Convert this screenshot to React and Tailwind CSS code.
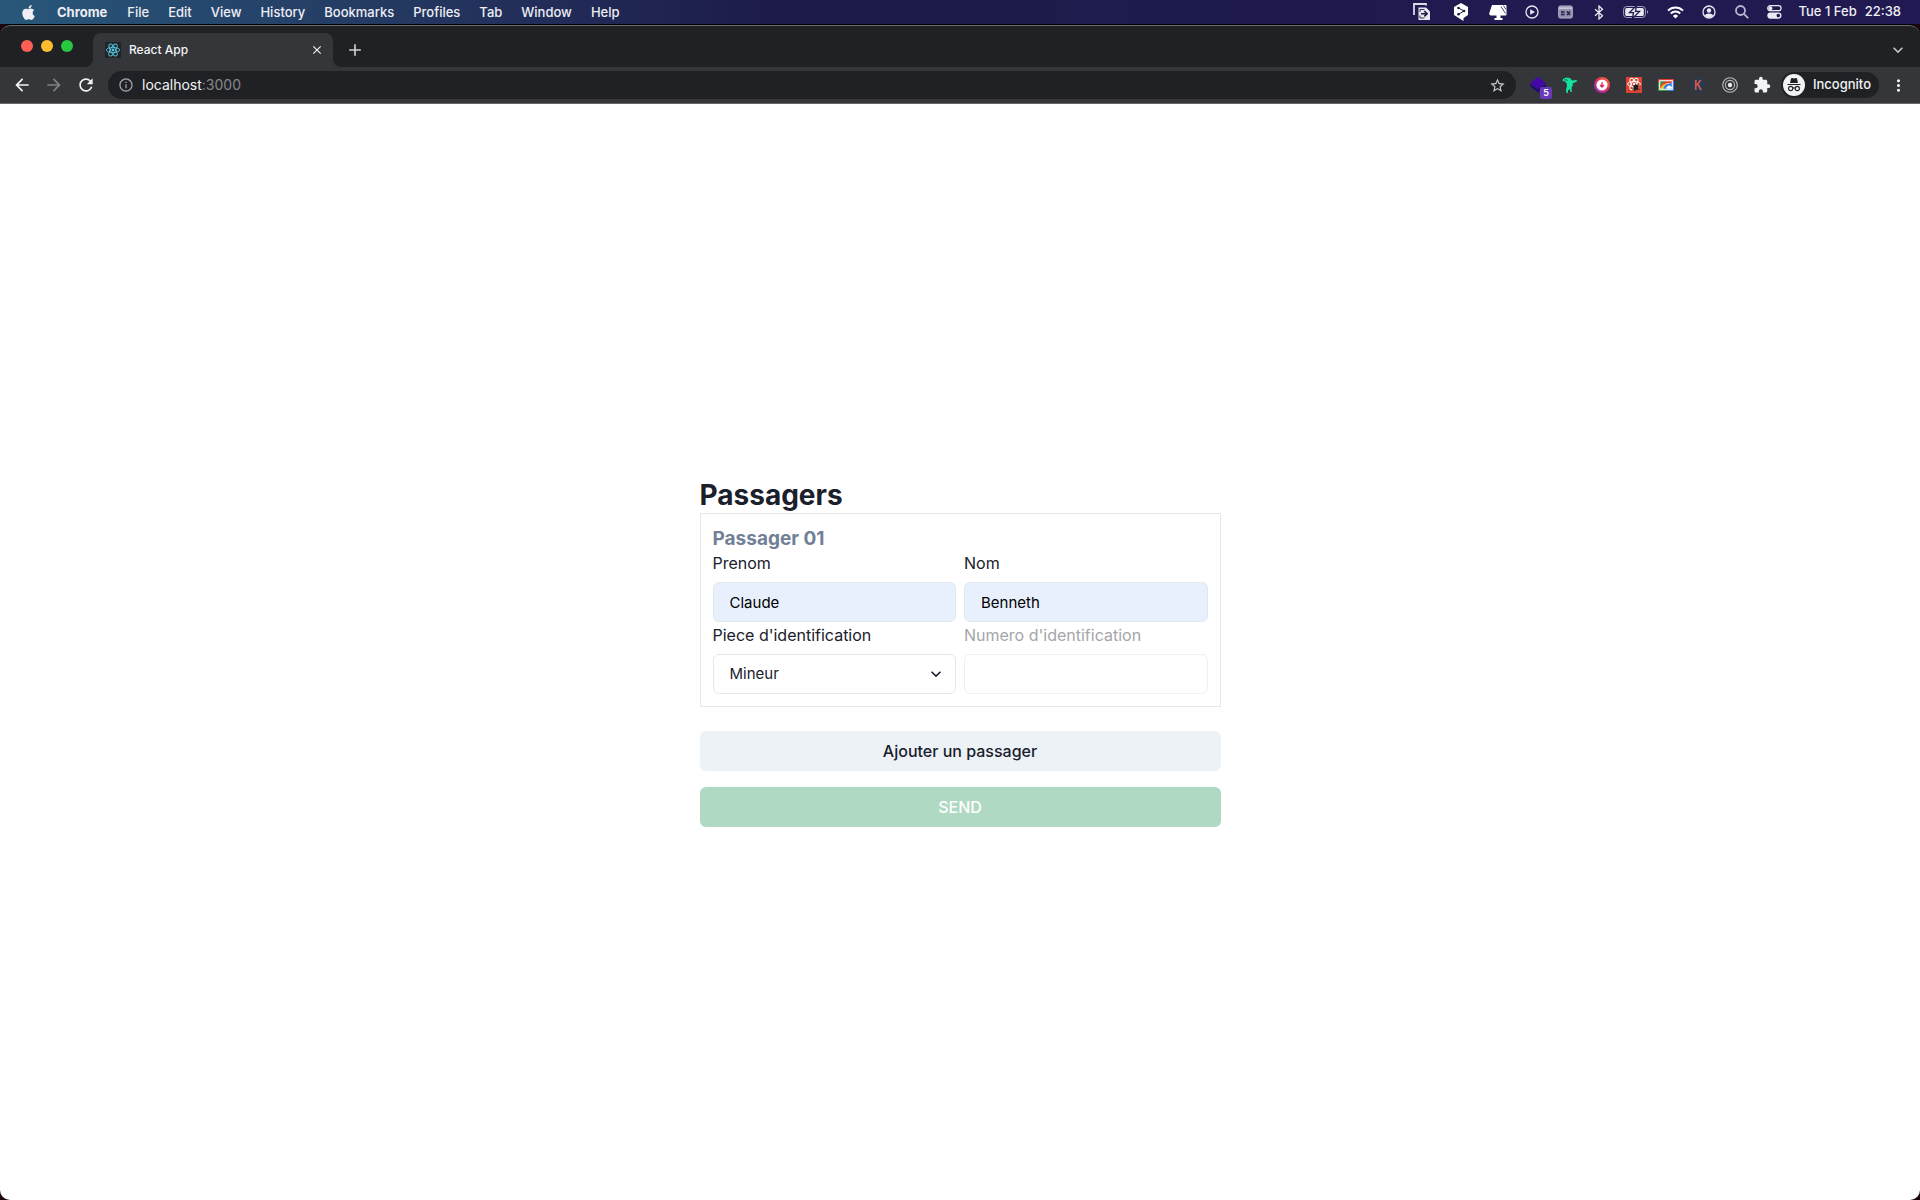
import React, { useState } from "react";
import {
  MdArrowBack,
  MdArrowForward,
  MdRefresh,
  MdStarBorder,
  MdExtension,
  MdInfoOutline,
  MdMoreVert,
  MdClose,
  MdAdd,
  MdKeyboardArrowDown,
} from "react-icons/md";
import { FaApple } from "react-icons/fa";

const menus = [
  "File",
  "Edit",
  "View",
  "History",
  "Bookmarks",
  "Profiles",
  "Tab",
  "Window",
  "Help",
];

const ScreensIcon = () => (
  <svg width="18" height="18" viewBox="0 0 18 18" fill="none">
    <path d="M1 12V1h12v1.500" stroke="#dcdce6" strokeWidth="1.800" />
    <path d="M5.500 4.500H13l4 4V17H5.500z" fill="#e9e9f2" />
    <path d="M7 9V6.500h4.500M7 12.500V15h4.500" stroke="#1d1b4b" strokeWidth="0.900" />
    <path d="M8 10.700h6M11.300 8l2.800 2.700-2.800 2.700" stroke="#1d1b4b" strokeWidth="1.600" />
  </svg>
);

const TranslateIcon = () => (
  <svg width="16" height="18" viewBox="0 0 16 18" fill="none">
    <path d="M8 0l7 4v8l-4.500 3v3L6.500 15.500 1 12V4z" fill="#fff" />
    <path d="M5.500 5L11 8l-5.500 3.200" stroke="#1d1b4b" />
    <circle cx="5.500" cy="5" r="1.300" fill="#1d1b4b" />
    <circle cx="11" cy="8" r="1.300" fill="#1d1b4b" />
    <circle cx="5.500" cy="11.200" r="1.300" fill="#1d1b4b" />
  </svg>
);

const MonitorIcon = () => (
  <svg width="19" height="17" viewBox="0 0 19 17">
    <path
      d="M3 1h13.500a1 1 0 0 1 1 1v8.500a1 1 0 0 1-1 1H11.500V14h2v2h-8v-2h2v-2.500H1.500L0 10z"
      fill="#fff"
    />
    <path d="M12 2.500l4.500 7M14.500 1.500l2.500 4" stroke="#1d1b4b" strokeWidth="0.800" />
  </svg>
);

const PlayIcon = () => (
  <svg width="14" height="14" viewBox="0 0 14 14">
    <circle cx="7" cy="7" r="6" fill="none" stroke="#e9e9f2" strokeWidth="1.300" />
    <path d="M5.200 4.200L10 7l-4.800 2.800z" fill="#e9e9f2" />
  </svg>
);

const CalendarIcon = () => (
  <svg width="15" height="14" viewBox="0 0 15 14" fill="none">
    <rect x="0.700" y="1" width="13.600" height="12" rx="1.500" fill="#8f8eab" stroke="#b5b4ca" />
    <path d="M1 3.200h13" stroke="#c6c5d8" strokeWidth="1.800" />
    <path d="M3 7h3.500M3 9.500h3.500M9 6.500l3 3.500M12 6.500L9 10" stroke="#1d1b4b" strokeWidth="1.300" />
  </svg>
);

const BluetoothIcon = () => (
  <svg width="10" height="15" viewBox="0 0 10 15" fill="none">
    <path d="M1 4.200l7.500 6.600L5 14V1l3.500 3.200L1 10.800" stroke="#e9e9f2" strokeWidth="1.300" />
  </svg>
);

const BatteryIcon = () => (
  <svg width="26" height="14" viewBox="0 0 26 14" fill="none">
    <rect x="0.600" y="1.500" width="21.800" height="11" rx="3" stroke="#a3a2bd" />
    <rect x="2.200" y="3" width="18.600" height="8" rx="1.600" fill="#e9e9f2" />
    <path d="M24 5.200c1.600.600 1.600 3 0 3.600z" fill="#a3a2bd" />
    <path
      d="M13.500 0.500L6.500 7.600h4L9.500 13.500l7-7.100h-4z"
      fill="#e9e9f2"
      stroke="#1d1b4b"
      strokeWidth="1.300"
    />
  </svg>
);

const WifiIcon = () => (
  <svg width="17" height="13" viewBox="0 0 17 13" fill="none">
    <path d="M1 4.600a10.600 10.600 0 0 1 15 0" stroke="#fff" strokeWidth="2" />
    <path d="M3.800 7.500a6.700 6.700 0 0 1 9.400 0" stroke="#fff" strokeWidth="2" />
    <path d="M8.500 12.500L5.900 9.900a3.700 3.700 0 0 1 5.200 0z" fill="#fff" />
  </svg>
);

const UserIcon = () => (
  <svg width="14" height="14" viewBox="0 0 14 14">
    <circle cx="7" cy="7" r="6" fill="none" stroke="#e9e9f2" strokeWidth="1.300" />
    <circle cx="7" cy="5.500" r="2.200" fill="#e9e9f2" />
    <path d="M2.800 10.700c1-3 7.400-3 8.400 0A5.500 5.500 0 0 1 7 12.500a5.500 5.500 0 0 1-4.200-1.800z" fill="#e9e9f2" />
  </svg>
);

const SearchIcon = () => (
  <svg width="14" height="14" viewBox="0 0 14 14" fill="none" stroke="#b9b8cf" strokeWidth="1.800">
    <circle cx="5.500" cy="5.500" r="4.500" />
    <path d="M8.800 8.800l4.400 4.400" />
  </svg>
);

const ControlIcon = () => (
  <svg width="15" height="14" viewBox="0 0 15 14" fill="none">
    <rect x="0.700" y="0.700" width="13.400" height="5" rx="2.500" stroke="#e9e9f2" strokeWidth="1.200" />
    <circle cx="3.400" cy="3.200" r="2" fill="#e9e9f2" />
    <rect x="0.300" y="7.500" width="14.200" height="6.200" rx="3.100" fill="#e9e9f2" />
    <circle cx="11.300" cy="10.600" r="1.800" fill="#1d1b4b" />
  </svg>
);

const ReactLogo = () => (
  <svg width="16" height="16" viewBox="0 0 16 16" fill="none" stroke="#57c4dc" strokeWidth="0.900">
    <rect width="16" height="16" rx="1" fill="#20232a" stroke="none" />
    <ellipse cx="8" cy="8" rx="6.700" ry="2.600" />
    <ellipse cx="8" cy="8" rx="6.700" ry="2.600" transform="rotate(60 8 8)" />
    <ellipse cx="8" cy="8" rx="6.700" ry="2.600" transform="rotate(120 8 8)" />
    <circle cx="8" cy="8" r="1.400" fill="#57c4dc" stroke="none" />
  </svg>
);

const LayersIcon = () => (
  <svg width="16" height="16" viewBox="0 0 16 16">
    <path d="M0 7l8 5 8-5v3.500L8 15.500 0 9z" fill="#22087a" />
    <path d="M8 0l8 6-8 6-8-6z" fill="#4407a8" />
  </svg>
);

const BirdIcon = () => (
  <svg width="16" height="16" viewBox="0 0 16 16">
    <path
      d="M1 2l3-1.500L8 1l2 2.500 4-.500 1.500 1-2.500 1.500-2 .500L10.500 9l-1 1.500.500 4.500H8.500L8 12l-2 1.500V16H4.500l-.500-3.500L5 9l-.500-3L3 4.500.500 4z"
      fill="#12e3a1"
    />
    <path d="M2 3h3M4 2l2 2" stroke="#14614d" strokeWidth="0.800" />
  </svg>
);

const DownloadIcon = () => (
  <svg width="16" height="16" viewBox="0 0 16 16">
    <defs>
      <linearGradient id="ring" x1="0" y1="1" x2="1" y2="0">
        <stop offset="0" stopColor="#8b2bd6" />
        <stop offset="0.500" stopColor="#e3255f" />
        <stop offset="1" stopColor="#f9822c" />
      </linearGradient>
    </defs>
    <circle cx="8" cy="8" r="8" fill="url(#ring)" />
    <circle cx="8" cy="8" r="5.600" fill="#fff" />
    <path d="M8 5.300v4M6 8l2 2 2-2" fill="none" stroke="#e3255f" strokeWidth="1.400" />
  </svg>
);

const DevtoolsIcon = () => (
  <svg width="16" height="16" viewBox="0 0 16 16" fill="none">
    <rect width="16" height="16" fill="#d9432f" />
    <g stroke="#fff" strokeWidth="1">
      <ellipse cx="8" cy="7" rx="6.500" ry="2.500" />
      <ellipse cx="8" cy="7" rx="6.500" ry="2.500" transform="rotate(60 8 7)" />
      <ellipse cx="8" cy="7" rx="6.500" ry="2.500" transform="rotate(120 8 7)" />
    </g>
    <circle cx="8" cy="7" r="1.200" fill="#fff" />
    <ellipse cx="10" cy="10.500" rx="2.400" ry="3" fill="#231a1a" />
    <path d="M6.500 8.500l7 4M6.500 12.500l7-4M8 14l4-6.500" stroke="#231a1a" />
  </svg>
);

const PictureIcon = () => (
  <svg width="16" height="12" viewBox="0 0 16 12">
    <rect width="16" height="12" rx="1" fill="#3b7ded" />
    <path d="M0 12V1l2-1h13l1 1v1H2v10z" fill="#e2402f" />
    <path d="M0 4h2v6h8v2H1l-1-1z" fill="#2c9e48" />
    <rect x="1.200" y="1.200" width="13.600" height="9.600" fill="#fff" />
    <path d="M2.200 9.800V7C3 4 5 2.200 8 2.200h5.800v2H9L2.200 9.800z" fill="#e2402f" />
    <path d="M2.200 2.200H8C5 3 3 5 2.200 7.500z" fill="#2c9e48" />
    <path d="M2.200 9.800C4 6 6 4.500 9.500 4.200L6 9.800z" fill="#f6c126" />
    <path d="M5.500 9.800C6 6.500 8 4.200 13.800 4.200v5.600z" fill="#3b7ded" />
    <path d="M8.500 9.800a1.500 1.500 0 0 1 1-2.300 2 2 0 0 1 3.400 0 1.200 1.200 0 0 1 .400 2.300z" fill="#fff" />
  </svg>
);

const KIcon = () => (
  <svg width="16" height="16" viewBox="0 0 16 16" fill="none">
    <circle cx="8" cy="8" r="7.500" fill="#263b4f" />
    <path d="M5.800 3v10M10.800 3L6.500 8.200M7.800 6.800L11 13" stroke="#d9544c" strokeWidth="1.700" />
  </svg>
);

const TargetIcon = () => (
  <svg width="16" height="16" viewBox="0 0 16 16" fill="none" stroke="#bcbdc0" strokeWidth="1.100">
    <circle cx="8" cy="8" r="7.300" />
    <circle cx="8" cy="8" r="4.600" />
    <circle cx="8" cy="8" r="2.200" fill="#e8eaed" stroke="none" />
  </svg>
);

const IncognitoIcon = () => (
  <svg width="22" height="22" viewBox="0 0 22 22" fill="none">
    <circle cx="11" cy="11" r="11" fill="#f1f3f4" />
    <path d="M7 9l1-4.500c.200-.600.700-.700 1.200-.500l1.800.500 1.800-.500c.500-.200 1-.100 1.200.500L15 9z" fill="#202124" />
    <path d="M4.500 10.500h13" stroke="#202124" strokeWidth="1.200" />
    <circle cx="7.700" cy="14.500" r="2.100" stroke="#202124" strokeWidth="1.100" />
    <circle cx="14.300" cy="14.500" r="2.100" stroke="#202124" strokeWidth="1.100" />
    <path d="M9.800 14.200c.700-.500 1.700-.500 2.400 0" stroke="#202124" strokeWidth="1.100" />
  </svg>
);

const statusItems = [
  { name: "Screens", icon: <ScreensIcon />, width: "w-6" },
  { name: "Translate", icon: <TranslateIcon />, width: "w-5" },
  { name: "Cleaner", icon: <MonitorIcon />, width: "w-5" },
  { name: "Now playing", icon: <PlayIcon />, width: "w-[17px]" },
  { name: "Events", icon: <CalendarIcon />, width: "w-5" },
  { name: "Bluetooth", icon: <BluetoothIcon />, width: "w-[13px]" },
  { name: "Battery", icon: <BatteryIcon />, width: "w-7" },
  { name: "Wi-Fi", icon: <WifiIcon />, width: "w-[19px]" },
  { name: "User", icon: <UserIcon />, width: "w-[17px]" },
  { name: "Spotlight", icon: <SearchIcon />, width: "w-4" },
  { name: "Control Center", icon: <ControlIcon />, width: "w-4" },
];

const extensions = [
  { name: "Layers", icon: <LayersIcon />, badge: "5" },
  { name: "Bird", icon: <BirdIcon /> },
  { name: "Downloader", icon: <DownloadIcon /> },
  { name: "Devtools", icon: <DevtoolsIcon /> },
  { name: "Pictures", icon: <PictureIcon /> },
  { name: "K", icon: <KIcon /> },
  { name: "Target", icon: <TargetIcon /> },
  { name: "Extensions", icon: <MdExtension size={18} color="#f1f3f4" /> },
];

const MenuBar = () => (
  <header className="flex h-6 items-center justify-between bg-linear-to-r from-[#28587a] via-[#1d1b4b] via-40% to-[#211a52] pl-5 pr-[19px] text-[13px] font-medium text-[#eeeef4]">
    <nav className="flex items-center gap-[19px] pt-px">
      <button aria-label="Apple" className="pr-px">
        <FaApple size={17} />
      </button>
      <button className="pr-px font-bold">Chrome</button>
      {menus.map((menu) => (
        <button key={menu}>{menu}</button>
      ))}
    </nav>
    <div className="flex items-center gap-4">
      {statusItems.map(({ name, icon, width }) => (
        <button key={name} aria-label={name} className={`flex shrink-0 ${width}`}>
          {icon}
        </button>
      ))}
      <span className="flex gap-2">
        <span>Tue 1 Feb</span>
        <span>22:38</span>
      </span>
    </div>
  </header>
);

const TabStrip = () => (
  <div className="flex h-[41px] items-end pl-[21px] pr-3">
    <div className="flex gap-2 self-center pb-[2px]">
      <button aria-label="Close window" className="size-3 rounded-full bg-[#ff5f57]" />
      <button aria-label="Minimize window" className="size-3 rounded-full bg-[#febc2e]" />
      <button aria-label="Zoom window" className="size-3 rounded-full bg-[#28c840]" />
    </div>
    <div className="ml-3 size-2 bg-[#35363a]">
      <div className="size-2 rounded-br-lg bg-[#202124]" />
    </div>
    <div className="flex h-[34px] w-60 items-center gap-2 rounded-t-lg bg-[#35363a] px-3">
      <ReactLogo />
      <span className="flex-1 text-xs font-medium text-[#f1f3f4]">React App</span>
      <button aria-label="Close tab" className="-mr-[3px] text-[#f1f3f4]">
        <MdClose size={14} />
      </button>
    </div>
    <div className="size-2 bg-[#35363a]">
      <div className="size-2 rounded-bl-lg bg-[#202124]" />
    </div>
    <button aria-label="New tab" className="flex h-[34px] w-7 items-center justify-center text-[#d0d1d4]">
      <MdAdd size={20} />
    </button>
    <button aria-label="Search tabs" className="ml-auto flex h-[34px] items-center text-[#c4c5c8]">
      <MdKeyboardArrowDown size={20} />
    </button>
  </div>
);

const Toolbar = () => (
  <div className="flex h-9 items-center bg-[#35363a] px-[6px] text-[#f1f3f4]">
    <button aria-label="Back" className="flex w-8 justify-center">
      <MdArrowBack size={20} />
    </button>
    <button aria-label="Forward" className="flex w-8 justify-center text-[#808184]">
      <MdArrowForward size={20} />
    </button>
    <button aria-label="Reload" className="flex w-8 justify-center">
      <MdRefresh size={20} />
    </button>
    <div className="mx-[6px] flex h-7 flex-1 items-center gap-2 rounded-full bg-[#202124] px-[10px] text-sm">
      <MdInfoOutline size={16} color="#9aa0a6" />
      <p className="flex-1 text-[#f1f3f4]">
        localhost<span className="text-[#86888b]">:3000</span>
      </p>
      <button aria-label="Bookmark this tab" className="text-[#c8c9cc]">
        <MdStarBorder size={17} />
      </button>
    </div>
    {extensions.map(({ name, icon, badge }) => (
      <button key={name} aria-label={name} className="relative flex w-8 justify-center">
        {icon}
        {badge && (
          <span className="absolute -bottom-[6px] right-[2px] flex size-3 items-center justify-center rounded-xs bg-[#673ab7] text-[9px] font-semibold text-white">
            {badge}
          </span>
        )}
      </button>
    ))}
    <button className="ml-[3px] flex h-[26px] items-center gap-2 rounded-full bg-[#202124] pl-[2px] pr-2 text-[13px] font-medium">
      <IncognitoIcon />
      Incognito
    </button>
    <button aria-label="Menu" className="ml-[3px] flex w-8 justify-center">
      <MdMoreVert size={19} />
    </button>
  </div>
);

const Field = ({ id, label, disabled, children }) => (
  <div className="min-w-0 flex-1">
    <label
      htmlFor={id}
      className={`block pt-px pb-[7px] ${disabled ? "text-[#a4a6aa]" : "text-[#1a202c]"}`}
    >
      {label}
    </label>
    {children}
  </div>
);

const PassengerForm = () => {
  const [prenom, setPrenom] = useState("Claude");
  const [nom, setNom] = useState("Benneth");
  const [piece, setPiece] = useState("Mineur");

  return (
    <form
      className="w-[521px] text-[16px] leading-6"
      onSubmit={(e) => e.preventDefault()}
    >
      <h1 className="pt-px text-[28px] leading-[35px] font-bold text-[#1a202c]">Passagers</h1>
      <section className="border border-[#e2e8f0] p-3">
        <h2 className="pt-px text-[19px] leading-[23px] font-bold text-[#718096]">
          Passager 01
        </h2>
        <div className="flex gap-2">
          <Field id="prenom" label="Prenom">
            <input
              id="prenom"
              value={prenom}
              onChange={(e) => setPrenom(e.target.value)}
              className="block h-10 w-full rounded-md border border-[#e2e8f0] bg-[#e8f0fe] px-4 text-[15px] text-black"
            />
          </Field>
          <Field id="nom" label="Nom">
            <input
              id="nom"
              value={nom}
              onChange={(e) => setNom(e.target.value)}
              className="block h-10 w-full rounded-md border border-[#e2e8f0] bg-[#e8f0fe] px-4 text-[15px] text-black"
            />
          </Field>
        </div>
        <div className="flex gap-2">
          <Field id="piece" label="Piece d'identification">
            <div className="relative">
              <select
                id="piece"
                value={piece}
                onChange={(e) => setPiece(e.target.value)}
                className="block h-10 w-full appearance-none rounded-md border border-[#e2e8f0] bg-white px-4 text-[15px] text-[#1a202c]"
              >
                <option>Mineur</option>
              </select>
              <MdKeyboardArrowDown
                size={20}
                className="pointer-events-none absolute top-[10px] right-[10px] text-[#1a202c]"
              />
            </div>
          </Field>
          <Field id="numero" label="Numero d'identification" disabled>
            <input
              id="numero"
              disabled
              className="block h-10 w-full rounded-md border border-[#edf0f5] bg-white px-4 text-[15px]"
            />
          </Field>
        </div>
      </section>
      <button
        type="button"
        className="mt-6 block h-10 w-full rounded-md bg-[#edf2f7] font-medium text-[#1a202c]"
      >
        Ajouter un passager
      </button>
      <button
        type="submit"
        disabled
        className="mt-4 block h-10 w-full rounded-md bg-[#afd9c3] font-medium text-white"
      >
        SEND
      </button>
    </form>
  );
};

const App = () => {
  return (
    <div className="flex min-h-screen flex-col bg-[#1a0510] font-[Inter,sans-serif]">
      <MenuBar />
      <div className="flex flex-1 flex-col overflow-hidden rounded-[10px] border-t border-black bg-[#202124]">
        <div className="rounded-t-[10px] border-t border-[#6b6b6e]">
          <TabStrip />
          <Toolbar />
        </div>
        <main className="flex flex-1 items-center justify-center border-t border-[#6b6668] bg-white">
          <PassengerForm />
        </main>
      </div>
    </div>
  );
};

export default App;
